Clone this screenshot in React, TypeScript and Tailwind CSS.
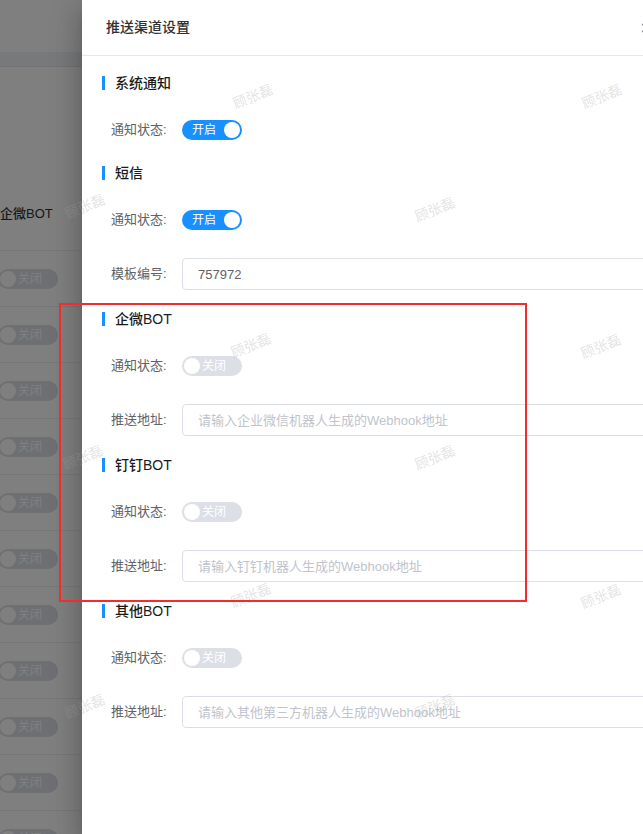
import React from 'react';

type Row =
  | { kind: 'switch'; on: boolean }
  | { kind: 'input'; label: string; value?: string; placeholder?: string };

type Section = { title: string; rows: Row[]; mb: string };

const sections: Section[] = [
  { title: '系统通知', rows: [{ kind: 'switch', on: true }], mb: 'mb-[17px]' },
  {
    title: '短信',
    rows: [
      { kind: 'switch', on: true },
      { kind: 'input', label: '模板编号', value: '757972' },
    ],
    mb: 'mb-[19px]',
  },
  {
    title: '企微BOT',
    rows: [
      { kind: 'switch', on: false },
      { kind: 'input', label: '推送地址', placeholder: '请输入企业微信机器人生成的Webhook地址' },
    ],
    mb: 'mb-[19px]',
  },
  {
    title: '钉钉BOT',
    rows: [
      { kind: 'switch', on: false },
      { kind: 'input', label: '推送地址', placeholder: '请输入钉钉机器人生成的Webhook地址' },
    ],
    mb: 'mb-[19px]',
  },
  {
    title: '其他BOT',
    rows: [
      { kind: 'switch', on: false },
      { kind: 'input', label: '推送地址', placeholder: '请输入其他第三方机器人生成的Webhook地址' },
    ],
    mb: 'mb-[19px]',
  },
];

function Switch({ on }: { on: boolean }) {
  if (on) {
    return (
      <div className="relative flex h-[20px] w-[60px] shrink-0 items-center rounded-full bg-[#1890ff]">
        <span className="ml-[10px] text-[12px] leading-none text-white">开启</span>
        <span className="absolute right-[2px] top-[2px] h-[16px] w-[16px] rounded-full bg-white" />
      </div>
    );
  }
  return (
    <div className="relative flex h-[20px] w-[60px] shrink-0 items-center rounded-full bg-[#dcdfe6]">
      <span className="ml-[2px] h-[16px] w-[16px] rounded-full bg-white" />
      <span className="ml-[2px] text-[12px] leading-none text-white">关闭</span>
    </div>
  );
}

function FormRow({ row }: { row: Row }) {
  const label = row.kind === 'switch' ? '通知状态' : row.label;
  return (
    <div className="flex h-[32px] items-center">
      <div className="w-[71px] shrink-0 text-[13px] text-[#606266]">{label}:</div>
      {row.kind === 'switch' ? (
        <Switch on={row.on} />
      ) : (
        <input
          readOnly
          value={row.value ?? ''}
          placeholder={row.placeholder}
          className="h-[32px] min-w-0 flex-1 rounded-[4px] border border-[#dcdfe6] bg-white px-[15px] text-[13px] text-[#606266] outline-none placeholder:text-[#c0c4cc]"
        />
      )}
    </div>
  );
}

const marks: [number, number][] = [
  [253, 97],
  [602, 97],
  [85, 207],
  [435, 210],
  [251, 346],
  [601, 347],
  [83, 458],
  [435, 458],
  [251, 596],
  [601, 597],
  [85, 707],
  [435, 707],
];

const bgRows = Array.from({ length: 11 }, (_, i) => i);

export default function App() {
  return (
    <div className="relative h-[834px] w-[643px] overflow-hidden bg-white font-['Liberation_Sans','Noto_Sans_CJK_SC',sans-serif]">
      {/* underlying page */}
      <div className="flex h-full flex-col bg-white">
        <div className="h-[52px] shrink-0" />
        <div className="h-[15px] shrink-0 border-b border-[#e4e7ed] bg-[#f0f2f5]" />
        <div className="flex h-[183px] shrink-0 items-end pb-[27px]">
          <span className="text-[13px] leading-[18px] font-medium text-[#303133]">企微BOT</span>
        </div>
        {bgRows.map((i) => (
          <div key={i} className="flex h-[56px] shrink-0 items-center border-t border-[#ebeef5]">
            <div className="ml-[-2px] flex h-[20px] w-[60px] items-center rounded-full bg-[#dcdfe6]">
              <span className="ml-[2px] h-[16px] w-[16px] rounded-full bg-white" />
              <span className="ml-[2px] text-[12px] leading-none text-white">关闭</span>
            </div>
          </div>
        ))}
      </div>

      {/* mask */}
      <div className="absolute inset-0 bg-black/50" />

      {/* drawer */}
      <div className="absolute left-[82px] top-0 flex h-full w-[590px] flex-col bg-white shadow-[0_8px_10px_-5px_rgba(0,0,0,0.2),0_16px_24px_2px_rgba(0,0,0,0.14),0_6px_30px_5px_rgba(0,0,0,0.12)]">
        <div className="flex h-[56px] shrink-0 items-center justify-between border-b border-[#e8e8e8] pl-[24px] pr-[20px]">
          <span className="text-[14px] font-medium text-[#303133]">推送渠道设置</span>
          <svg width="12" height="12" viewBox="0 0 12 12" className="text-[#909399]">
            <path d="M2 2L10 10M10 2L2 10" stroke="currentColor" strokeWidth="1.3" />
          </svg>
        </div>
        <div className="flex flex-col pt-[17px]">
          {sections.map((s) => (
            <div key={s.title} className={`flex flex-col ${s.mb}`}>
              <div className="flex h-[20px] items-center pl-[20px]">
                <span className="h-[14px] w-[3px] bg-[#1890ff]" />
                <span className="ml-[10px] text-[14px] font-medium text-[#1a1a1a]">{s.title}</span>
              </div>
              <div className="mt-[21px] flex flex-col gap-[22px] pl-[29px] pr-[20px]">
                {s.rows.map((r, i) => (
                  <FormRow key={i} row={r} />
                ))}
              </div>
            </div>
          ))}
        </div>
      </div>

      {/* watermark */}
      <div className="pointer-events-none absolute inset-0">
        {marks.map(([x, y], i) => (
          <span
            key={i}
            className="absolute -translate-x-1/2 -translate-y-1/2 -rotate-[22deg] whitespace-nowrap text-[14px] text-[rgba(160,160,160,0.3)]"
            style={{ left: x, top: y }}
          >
            顾张磊
          </span>
        ))}
      </div>

      {/* annotation box */}
      <div className="pointer-events-none absolute left-[59px] top-[303px] h-[299px] w-[468px] border-2 border-[#f52a2a]" />
    </div>
  );
}
